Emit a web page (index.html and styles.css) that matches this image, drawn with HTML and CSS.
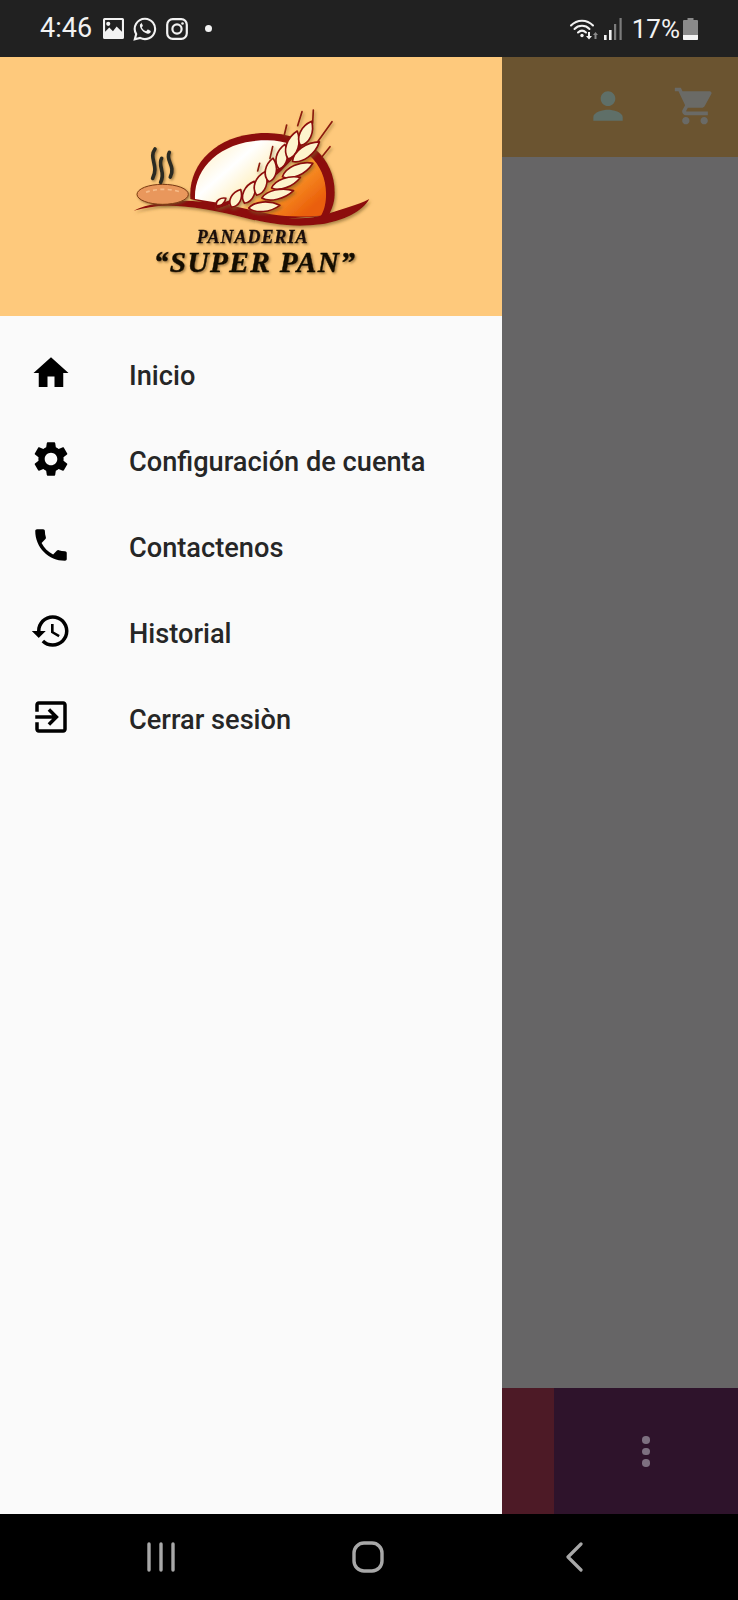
FILE: index.html
```html
<!DOCTYPE html>
<html lang="es">
<head>
<meta charset="utf-8">
<title>Panadería Super Pan</title>
<link rel="stylesheet" href="styles.css">
</head>
<body>
<div class="screen">
  <header class="status">
    <div class="status-left">
      <span class="time">4:46</span>
      <svg class="si si-img" viewBox="0 0 20 20"><path fill="#f2f2f2" fill-rule="evenodd" d="M1.5 0h17A1.5 1.5 0 0 1 20 1.5v17a1.500 1.500 0 0 1-1.500 1.500h-17A1.500 1.500 0 0 1 0 18.500v-17A1.500 1.500 0 0 1 1.500 0zM2 2v11l4-4 3.500 3.500L13 8l5 5V2zM5 3.500a2 2 0 1 1 0 4 2 2 0 0 1 0-4z"/></svg>
      <svg class="si si-wa" viewBox="0 0 24 24"><path fill="none" stroke="#f2f2f2" stroke-width="2.100" d="M12 1.700a10.200 10.200 0 0 0-8.800 15.400L1.800 22.300l5.300-1.400A10.200 10.200 0 1 0 12 1.700z"/><path fill="#f2f2f2" d="M8.300 6.500c-.5 0-1.400.7-1.400 2.200 0 2.600 3.700 7.400 7.800 8 1.800.2 2.900-1 3-2 .1-.7 0-.9-.3-1l-2.300-1.100c-.3-.1-.5 0-.7.200l-1 1.200c-.2.200-.4.200-.7.100-1.700-.7-3-1.900-3.800-3.400-.1-.3 0-.5.100-.6l.7-.9c.2-.2.200-.4.100-.6l-1-2.400c-.1-.3-.3-.4-.5-.4z"/></svg>
      <svg class="si si-ig" viewBox="0 0 22 22"><rect x="1.200" y="1.200" width="19.600" height="19.600" rx="5.500" fill="none" stroke="#f2f2f2" stroke-width="2.200"/><circle cx="11" cy="11" r="4.600" fill="none" stroke="#f2f2f2" stroke-width="2.200"/><circle cx="16.500" cy="5.500" r="1.300" fill="#f2f2f2"/></svg>
      <span class="dot"></span>
    </div>
    <div class="status-right">
      <svg class="si si-wifi" viewBox="0 0 28 22"><g fill="none" stroke="#f2f2f2" stroke-width="2" stroke-linecap="round"><path d="M1 7.500C7 1 17 1 23 7.500"/><path d="M4.500 11c4-4.200 11-4.200 15 0"/><path d="M8 14.500c2.500-2.300 5.500-2.300 8 0"/></g><circle cx="12" cy="17.500" r="1.700" fill="#f2f2f2"/><path fill="#f2f2f2" d="M18 14h2v4h2l-3 3.500-3-3.500h2z"/><path fill="#8a8a8a" d="M24.500 21v-4h-1.500l2.500-3 2.500 3H26.500v4z"/></svg>
      <svg class="si si-sig" viewBox="0 0 18 22"><rect x="0" y="17" width="2.600" height="5" fill="#f2f2f2"/><rect x="5" y="12" width="2.600" height="10" fill="#f2f2f2"/><rect x="10" y="6" width="2.200" height="16" fill="#7c7c7c"/><rect x="15.500" y="0" width="2.200" height="22" fill="#7c7c7c"/></svg>
      <span class="pct">17%</span>
      <svg class="si si-bat" viewBox="0 0 15 22"><path fill="#8a8a8a" d="M4.500 0h6v2H14a1 1 0 0 1 1 1v18a1 1 0 0 1-1 1H1a1 1 0 0 1-1-1V3a1 1 0 0 1 1-1h3.500z"/><path fill="#f4f4f4" d="M0 17h15v4a1 1 0 0 1-1 1H1a1 1 0 0 1-1-1z"/></svg>
    </div>
  </header>

  <div class="body">
    <aside class="drawer">
      <div class="drawer-head">
        <svg class="logo" viewBox="0 0 780 585">
          <defs>
            <linearGradient id="sun" x1="0.050" y1="0.200" x2="0.950" y2="0.800">
              <stop offset="0" stop-color="#fff3d0"/>
              <stop offset="0.250" stop-color="#ffffff"/>
              <stop offset="0.520" stop-color="#fff0c0"/>
              <stop offset="0.660" stop-color="#fb9a2c"/>
              <stop offset="1" stop-color="#ea5f0a"/>
            </linearGradient>
            <filter id="soft" x="-5%" y="-5%" width="115%" height="120%">
              <feDropShadow dx="4" dy="6" stdDeviation="4" flood-color="#7a5a28" flood-opacity="0.600"/>
            </filter>
            <filter id="tsoft" x="-5%" y="-10%" width="115%" height="130%">
              <feDropShadow dx="4" dy="4" stdDeviation="3" flood-color="#6d4f22" flood-opacity="0.650"/>
            </filter>
          </defs>
          <g filter="url(#soft)">
            <path fill="#8c0c0c" d="M208 312C200 205 290 112 440 114C560 116 645 190 641 300C640 325 632 345 622 362L480 372L300 335Z"/>
            <path fill="url(#sun)" d="M222 312C218 215 305 134 440 136C548 138 620 210 615 305C614 330 608 348 600 362C545 366 500 366 450 358L300 325Z"/>
            <path fill="#8c0c0c" d="M38 347C85 325 150 315 215 318C300 322 380 348 450 362C520 374 570 372 620 356C665 342 710 330 745 312C725 350 665 378 600 388C520 398 450 388 370 368C290 348 210 332 140 332C105 332 70 338 38 347Z"/>
          </g>
          <g filter="url(#soft)">
            <g fill="none" stroke="#8c1a10" stroke-width="5" stroke-linecap="round">
              <path d="M530 92L543 50"/><path d="M575 85L577 45"/><path d="M590 140L633 80"/><path d="M603 185L627 155"/><path d="M490 120L497 90"/><path d="M447 190L455 155"/><path d="M410 228L416 205"/>
            </g>
            <path fill="none" stroke="#8c0c0c" stroke-width="12" stroke-linecap="round" d="M290 335C400 300 500 220 550 130"/>
            <g fill="#fdf4cd" stroke="#8c0c0c" stroke-width="5" stroke-linejoin="round">
              <path transform="translate(300 320) rotate(-35)" d="M-18 0C-11-12 6-12 18 0C6 12-11 12-18 0Z"/>
              <path transform="translate(345 310) rotate(-62)" d="M-30 0C-18-20 10-20 30 0C10 20-18 20-30 0Z"/>
              <path transform="translate(385 292) rotate(-66)" d="M-36 0C-22-22 13-22 36 0C13 22-22 22-36 0Z"/>
              <path transform="translate(420 265) rotate(-70)" d="M-38 0C-23-23 13-23 38 0C13 23-23 23-38 0Z"/>
              <path transform="translate(450 225) rotate(-80)" d="M-36 0C-22-22 13-22 36 0C13 22-22 22-36 0Z"/>
              <path transform="translate(483 185) rotate(-77)" d="M-38 0C-23-22 13-22 38 0C13 22-23 22-38 0Z"/>
              <path transform="translate(515 150) rotate(-72)" d="M-44 0C-26-24 15-24 44 0C15 24-26 24-44 0Z"/>
              <path transform="translate(555 115) rotate(-65)" d="M-40 0C-24-23 14-23 40 0C14 23-24 23-40 0Z"/>
              <path transform="translate(555 170) rotate(-36)" d="M-50 0C-30-23 18-23 50 0C18 23-30 23-50 0Z"/>
              <path transform="translate(530 225) rotate(-24)" d="M-50 0C-30-22 18-22 50 0C18 22-30 22-50 0Z"/>
              <path transform="translate(495 263) rotate(-20)" d="M-46 0C-28-19 16-19 46 0C16 19-28 19-46 0Z"/>
              <path transform="translate(470 298) rotate(-13)" d="M-49 0C-29-19 17-19 49 0C17 19-29 19-49 0Z"/>
              <path transform="translate(430 335) rotate(-5)" d="M-47 0C-28-19 16-19 47 0C16 19-28 19-47 0Z"/>
            </g>
          </g>
          <g filter="url(#tsoft)">
            <ellipse cx="125" cy="298" rx="77" ry="30" fill="#e9975c" stroke="#7b3a12" stroke-width="3"/>
            <path fill="none" stroke="#f7bd8a" stroke-width="5" stroke-dasharray="12 10" d="M75 292C105 280 150 280 180 292"/>
            <g fill="none" stroke="#2c2c22" stroke-width="11" stroke-linecap="round">
              <path d="M102 162C82 190 115 212 95 250"/>
              <path d="M122 190C109 212 135 232 119 262"/>
              <path d="M145 172C132 196 165 212 148 246"/>
            </g>
          </g>
          <g filter="url(#tsoft)">
            <text x="395" y="444" class="logo-sm">PANADERIA</text>
            <text x="402" y="531" class="logo-lg">“SUPER PAN”</text>
          </g>
        </svg>
      </div>
      <nav class="menu">
        <a class="item"><svg class="ico" viewBox="0 0 24 24"><path d="M10 20v-6h4v6h5v-8h3L12 3 2 12h3v8z"/></svg><span>Inicio</span></a>
        <a class="item"><svg class="ico" viewBox="0 0 24 24"><path d="M19.140 12.940c.04-.3.060-.61.060-.94 0-.32-.020-.64-.070-.94l2.030-1.580c.18-.14.230-.41.120-.61l-1.920-3.320c-.12-.22-.37-.29-.59-.22l-2.390.96c-.5-.38-1.030-.7-1.620-.94l-.36-2.540c-.04-.24-.24-.41-.48-.41h-3.840c-.24 0-.43.170-.47.410l-.36 2.540c-.59.24-1.130.57-1.620.94l-2.390-.96c-.22-.08-.47 0-.59.220L2.740 8.870c-.12.210-.080.470.12.610l2.030 1.580c-.05.3-.09.630-.09.940s.02.640.07.940l-2.030 1.580c-.18.140-.23.410-.12.610l1.920 3.320c.12.220.37.290.59.220l2.390-.96c.5.380 1.030.7 1.620.94l.36 2.540c.05.240.24.410.48.410h3.840c.24 0 .44-.170.47-.410l.36-2.540c.59-.24 1.130-.56 1.620-.94l2.390.96c.22.080.47 0 .59-.220l1.920-3.320c.12-.22.070-.47-.12-.61l-2.010-1.580zM12 15.600c-1.980 0-3.600-1.620-3.600-3.600s1.620-3.600 3.600-3.600 3.600 1.620 3.600 3.600-1.620 3.600-3.600 3.600z"/></svg><span>Configuración de cuenta</span></a>
        <a class="item"><svg class="ico" viewBox="0 0 24 24"><path d="M6.620 10.790c1.440 2.830 3.760 5.140 6.590 6.590l2.200-2.200c.27-.27.670-.36 1.020-.24 1.120.37 2.330.57 3.570.57.55 0 1 .45 1 1V20c0 .55-.45 1-1 1-9.390 0-17-7.610-17-17 0-.55.45-1 1-1h3.500c.55 0 1 .45 1 1 0 1.250.2 2.450.57 3.570.11.350.03.740-.25 1.020l-2.200 2.200z"/></svg><span>Contactenos</span></a>
        <a class="item"><svg class="ico" viewBox="0 0 24 24"><path d="M13 3c-4.970 0-9 4.030-9 9H1l3.890 3.890.07.140L9 12H6c0-3.870 3.130-7 7-7s7 3.130 7 7-3.130 7-7 7c-1.930 0-3.680-.79-4.940-2.060l-1.420 1.420C8.270 19.990 10.510 21 13 21c4.970 0 9-4.030 9-9s-4.030-9-9-9zm-1 5v5l4.280 2.540.72-1.210-3.500-2.080V8H12z"/></svg><span>Historial</span></a>
        <a class="item"><svg class="ico" viewBox="0 0 24 24"><path d="M10.090 15.590L11.500 17l5-5-5-5-1.410 1.410L12.670 11H3v2h9.670l-2.580 2.590zM19 3H5c-1.110 0-2 .9-2 2v4h2V5h14v14H5v-4H3v4c0 1.100.89 2 2 2h14c1.100 0 2-.9 2-2V5c0-1.100-.9-2-2-2z"/></svg><span>Cerrar sesiòn</span></a>
      </nav>
    </aside>

    <main class="behind">
      <div class="topbar">
        <svg class="tb-ico tb-person" viewBox="0 0 24 24"><path d="M12 12c2.210 0 4-1.790 4-4s-1.790-4-4-4-4 1.790-4 4 1.790 4 4 4zm0 2c-2.670 0-8 1.340-8 4v2h16v-2c0-2.660-5.330-4-8-4z"/></svg>
        <svg class="tb-ico tb-cart" viewBox="0 0 24 24"><path d="M7 18c-1.100 0-1.990.9-1.990 2S5.900 22 7 22s2-.9 2-2-.9-2-2-2zM1 2v2h2l3.600 7.590-1.350 2.450c-.16.280-.25.610-.25.960 0 1.100.9 2 2 2h12v-2H7.420c-.14 0-.25-.11-.25-.25l.03-.12.9-1.630h7.450c.75 0 1.410-.41 1.750-1.030l3.580-6.490c.08-.14.12-.31.12-.48 0-.55-.45-1-1-1H5.210l-.94-2H1zm16 16c-1.100 0-1.990.9-1.990 2s.89 2 1.990 2 2-.9 2-2-.9-2-2-2z"/></svg>
      </div>
      <div class="content"></div>
      <div class="bottom">
        <div class="tab-red"></div>
        <div class="tab-purple"><span class="kebab"><i></i><i></i><i></i></span></div>
      </div>
    </main>
  </div>

  <footer class="navbar">
    <svg class="nav-recents" viewBox="0 0 28 30"><g stroke="#a8a8a8" stroke-width="3.400" stroke-linecap="round"><path d="M2 2v26"/><path d="M14 2v26"/><path d="M26 2v26"/></g></svg>
    <svg class="nav-home" viewBox="0 0 32 32"><rect x="2" y="2" width="28" height="28" rx="10" fill="none" stroke="#a8a8a8" stroke-width="3.400"/></svg>
    <svg class="nav-back" viewBox="0 0 18 30"><path d="M16 2L3 15l13 13" fill="none" stroke="#a8a8a8" stroke-width="3.200" stroke-linecap="round" stroke-linejoin="round"/></svg>
  </footer>
</div>
</body>
</html>
```

FILE: styles.css
```css
* { box-sizing: border-box; }
html, body { margin: 0; padding: 0; }
body { font-family: Roboto, "Liberation Sans", sans-serif; background: #000; }

.screen { width: 738px; height: 1600px; display: flex; flex-direction: column; overflow: hidden; }

/* Status bar */
.status { height: 57px; flex: none; background: #212121; display: flex; justify-content: space-between; align-items: center; padding: 0 40px 0 40px; color: #f2f2f2; }
.status-left, .status-right { display: flex; align-items: center; }
.time { font-size: 27px; line-height: 1; width: 63px; }
.pct { font-size: 26px; line-height: 1; margin: 0 3px 0 10px; }
.si { display: block; flex: none; }
.si-img { width: 21px; height: 21px; }
.si-wa { width: 24px; height: 24px; margin-left: 9px; }
.si-ig { width: 22px; height: 22px; margin-left: 9px; }
.dot { width: 7px; height: 7px; border-radius: 50%; background: #f2f2f2; margin-left: 17px; }
.si-wifi { width: 28px; height: 22px; }
.si-sig { width: 18px; height: 22px; margin-left: 6px; }
.si-bat { width: 15px; height: 22px; }

/* Main area */
.body { flex: 1; display: flex; min-height: 0; }
.drawer { width: 502px; flex: none; background: #fafafa; display: flex; flex-direction: column; }
.drawer-head { height: 259px; flex: none; background: #fec97c; display: flex; justify-content: center; align-items: flex-start; padding-top: 38px; }
.logo { width: 260px; height: 195px; display: block; }
.logo-sm { font: italic bold 54px "Liberation Serif", serif; letter-spacing: 3px; fill: #1a1008; stroke: #1a1008; stroke-width: 1px; text-anchor: middle; }
.logo-lg { font: italic bold 88px "Liberation Serif", serif; letter-spacing: 4px; fill: #120a04; stroke: #120a04; stroke-width: 1.500px; text-anchor: middle; }

.menu { display: flex; flex-direction: column; padding-top: 17px; }
.item { height: 86px; display: flex; align-items: center; padding-left: 30px; gap: 57px; color: #262626; font-size: 27.200px; font-weight: 500; }
.ico { width: 42px; height: 42px; flex: none; fill: #000; position: relative; top: -3px; }

/* Dimmed page behind the drawer */
.behind { flex: 1; display: flex; flex-direction: column; background: #666566; }
.topbar { height: 100px; flex: none; background: #6b5430; display: flex; justify-content: flex-end; align-items: center; padding-right: 21px; padding-bottom: 2px; gap: 43px; }
.tb-ico { width: 44px; height: 44px; display: block; }
.tb-person { fill: #5f6f68; }
.tb-cart { fill: #6a6a66; }
.content { flex: 1; background: #666566; }
.bottom { height: 126px; flex: none; display: flex; }
.tab-red { width: 52px; background: #4d1a26; }
.tab-purple { flex: 1; background: #2e132b; display: flex; justify-content: center; align-items: center; }
.kebab { display: flex; flex-direction: column; gap: 4px; margin-top: 1px; }
.kebab i { display: block; width: 7.500px; height: 7.500px; border-radius: 50%; background: #7d7080; }

/* Android navigation */
.navbar { height: 86px; flex: none; background: #000; display: flex; align-items: center; padding: 0 0 0 147px; }
.navbar svg { display: block; flex: none; }
.nav-recents { width: 28px; height: 30px; }
.nav-home { width: 32px; height: 32px; margin-left: 177px; }
.nav-back { width: 18px; height: 30px; margin-left: 181px; }
```
